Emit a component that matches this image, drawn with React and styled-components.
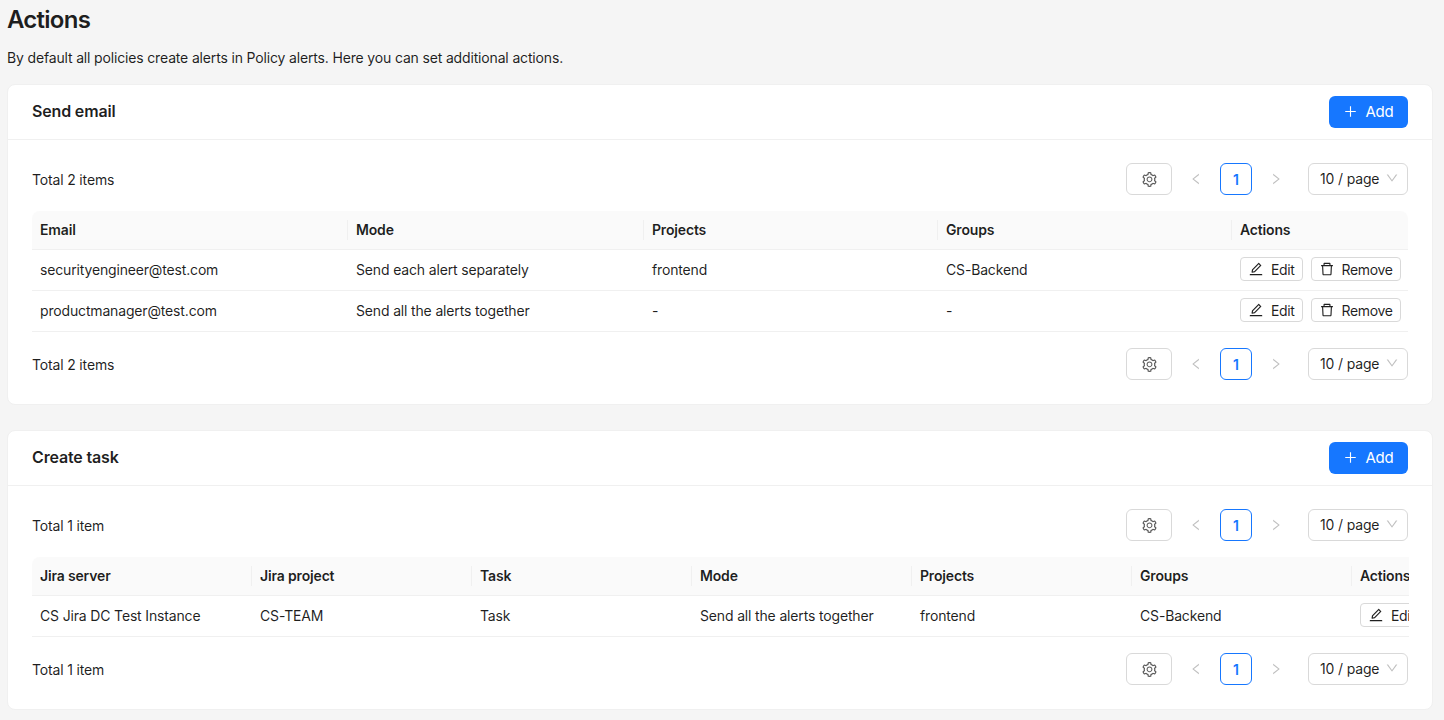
import React from 'react';
import styled, { createGlobalStyle } from 'styled-components';
import {
  AiOutlineDelete,
  AiOutlineDown,
  AiOutlineEdit,
  AiOutlineLeft,
  AiOutlinePlus,
  AiOutlineRight,
  AiOutlineSetting,
} from 'react-icons/ai';

const GlobalStyle = createGlobalStyle`
  html, body {
    margin: 0;
    padding: 0;
    background: #f5f5f5;
    font-family: Inter, "Liberation Sans", sans-serif;
    font-size: 14px;
    letter-spacing: -0.16px;
    color: rgba(0, 0, 0, 0.88);
  }
`;

const Page = styled.div`
  width: 1444px;
  height: 720px;
  padding: 0 11px 0 7px;
  box-sizing: border-box;
  overflow: hidden;
`;

const Title = styled.h1`
  margin: 0;
  padding-top: 5px;
  font-size: 24px;
  line-height: 30px;
  font-weight: 600;
  letter-spacing: -0.75px;
`;

const Description = styled.p`
  margin: 12px 0 15px;
  font-size: 14px;
  line-height: 22px;
`;

const Card = styled.section`
  background: #fff;
  border: 1px solid #f0f0f0;
  border-radius: 8px;
  margin-bottom: 25px;
  box-sizing: border-box;
`;

const CardHead = styled.header`
  display: flex;
  align-items: center;
  justify-content: space-between;
  height: 54px;
  padding: 0 24px;
  border-bottom: 1px solid #f0f0f0;
`;

const CardTitle = styled.h2`
  margin: 0 0 3px;
  font-size: 16px;
  font-weight: 600;
`;

const CardBody = styled.div`
  padding: 23px 24px 24px;
`;

const AddButton = styled.button`
  display: flex;
  align-items: center;
  justify-content: center;
  gap: 7px;
  width: 79px;
  height: 32px;
  padding: 0 0 2px;
  border: 0;
  border-radius: 6px;
  background: #1677ff;
  color: #fff;
  font: inherit;
  font-size: 15px;
  letter-spacing: inherit;
`;

const PagerRow = styled.div`
  display: flex;
  align-items: center;
  height: 32px;
`;

const Total = styled.span`
  flex: 1;
  padding-top: 1px;
  line-height: 22px;
`;

const SettingsButton = styled.button`
  display: flex;
  align-items: center;
  justify-content: center;
  width: 46px;
  height: 32px;
  margin-right: 8px;
  padding: 0;
  box-sizing: border-box;
  background: #fff;
  border: 1px solid #d9d9d9;
  border-radius: 6px;
  color: rgba(0, 0, 0, 0.65);
`;

const Arrow = styled.span`
  display: flex;
  align-items: center;
  justify-content: center;
  width: 32px;
  color: rgba(0, 0, 0, 0.25);
  font-size: 14px;
`;

const PageNumber = styled.span`
  display: flex;
  align-items: center;
  justify-content: center;
  width: 32px;
  height: 32px;
  margin: 0 8px;
  box-sizing: border-box;
  border: 1px solid #1677ff;
  border-radius: 6px;
  color: #1677ff;
  font-weight: 600;
`;

const PageSize = styled.span`
  display: flex;
  align-items: center;
  justify-content: space-between;
  width: 100px;
  height: 32px;
  margin-left: 16px;
  padding: 0 8px 2px 11px;
  box-sizing: border-box;
  border: 1px solid #d9d9d9;
  border-radius: 6px;
  svg {
    color: rgba(0, 0, 0, 0.25);
    font-size: 14px;
  }
`;

const TableWrap = styled.div`
  margin: 16px -1px 16px 0;
  overflow: hidden;
`;

const Table = styled.table`
  width: ${(props) => props.$width}px;
  border-collapse: separate;
  border-spacing: 0;
  table-layout: fixed;
`;

const HeadCell = styled.th`
  position: relative;
  height: 39px;
  padding: 0 8px 2px;
  box-sizing: border-box;
  background: #fafafa;
  border-bottom: 1px solid #f0f0f0;
  font-weight: 600;
  text-align: left;
  white-space: nowrap;
  &:first-child {
    border-top-left-radius: 8px;
  }
  &:last-child {
    border-top-right-radius: 8px;
  }
  &:not(:last-child)::after {
    content: '';
    position: absolute;
    top: 9px;
    right: 0;
    width: 1px;
    height: 20px;
    background: #f0f0f0;
  }
`;

const Cell = styled.td`
  height: 41px;
  padding: 0 8px 2px;
  box-sizing: border-box;
  border-bottom: 1px solid #f0f0f0;
  white-space: nowrap;
  overflow: hidden;
`;

const RowActions = styled.div`
  display: flex;
  gap: 8px;
`;

const SmallButton = styled.button`
  display: flex;
  flex: none;
  align-items: center;
  gap: 7px;
  height: 24px;
  padding: 0 7px;
  box-sizing: border-box;
  background: #fff;
  border: 1px solid #d9d9d9;
  border-radius: 4px;
  color: rgba(0, 0, 0, 0.88);
  font: inherit;
  letter-spacing: -0.35px;
`;

const Pager = ({ total }) => (
  <PagerRow>
    <Total>{total}</Total>
    <SettingsButton aria-label="Settings">
      <AiOutlineSetting size={17} />
    </SettingsButton>
    <Arrow>
      <AiOutlineLeft />
    </Arrow>
    <PageNumber>1</PageNumber>
    <Arrow>
      <AiOutlineRight />
    </Arrow>
    <PageSize>
      10 / page
      <AiOutlineDown />
    </PageSize>
  </PagerRow>
);

const ActionButtons = () => (
  <RowActions>
    <SmallButton>
      <AiOutlineEdit size={16} />
      Edit
    </SmallButton>
    <SmallButton>
      <AiOutlineDelete size={16} />
      Remove
    </SmallButton>
  </RowActions>
);

const ActionCard = ({ title, total, columns, rows, tableWidth }) => (
  <Card>
    <CardHead>
      <CardTitle>{title}</CardTitle>
      <AddButton>
        <AiOutlinePlus size={15} />
        Add
      </AddButton>
    </CardHead>
    <CardBody>
      <Pager total={total} />
      <TableWrap>
        <Table $width={tableWidth}>
          <colgroup>
            {columns.map((col) => (
              <col key={col.name} width={col.width} />
            ))}
          </colgroup>
          <thead>
            <tr>
              {columns.map((col) => (
                <HeadCell key={col.name}>{col.name}</HeadCell>
              ))}
            </tr>
          </thead>
          <tbody>
            {rows.map((row) => (
              <tr key={row[0]}>
                {row.map((value, i) => (
                  <Cell key={i}>{value}</Cell>
                ))}
                <Cell>
                  <ActionButtons />
                </Cell>
              </tr>
            ))}
          </tbody>
        </Table>
      </TableWrap>
      <Pager total={total} />
    </CardBody>
  </Card>
);

const emailColumns = [
  { name: 'Email', width: 316 },
  { name: 'Mode', width: 296 },
  { name: 'Projects', width: 294 },
  { name: 'Groups', width: 294 },
  { name: 'Actions', width: 176 },
];

const emailRows = [
  ['securityengineer@test.com', 'Send each alert separately', 'frontend', 'CS-Backend'],
  ['productmanager@test.com', 'Send all the alerts together', '-', '-'],
];

const taskColumns = [
  { name: 'Jira server', width: 220 },
  { name: 'Jira project', width: 220 },
  { name: 'Task', width: 220 },
  { name: 'Mode', width: 220 },
  { name: 'Projects', width: 220 },
  { name: 'Groups', width: 220 },
  { name: 'Actions', width: 176 },
];

const taskRows = [
  ['CS Jira DC Test Instance', 'CS-TEAM', 'Task', 'Send all the alerts together', 'frontend', 'CS-Backend'],
];

const App = () => (
  <Page>
    <GlobalStyle />
    <Title>Actions</Title>
    <Description>
      By default all policies create alerts in Policy alerts. Here you can set additional actions.
    </Description>
    <ActionCard
      title="Send email"
      total="Total 2 items"
      columns={emailColumns}
      rows={emailRows}
      tableWidth={1376}
    />
    <ActionCard
      title="Create task"
      total="Total 1 item"
      columns={taskColumns}
      rows={taskRows}
      tableWidth={1496}
    />
  </Page>
);

export default App;
